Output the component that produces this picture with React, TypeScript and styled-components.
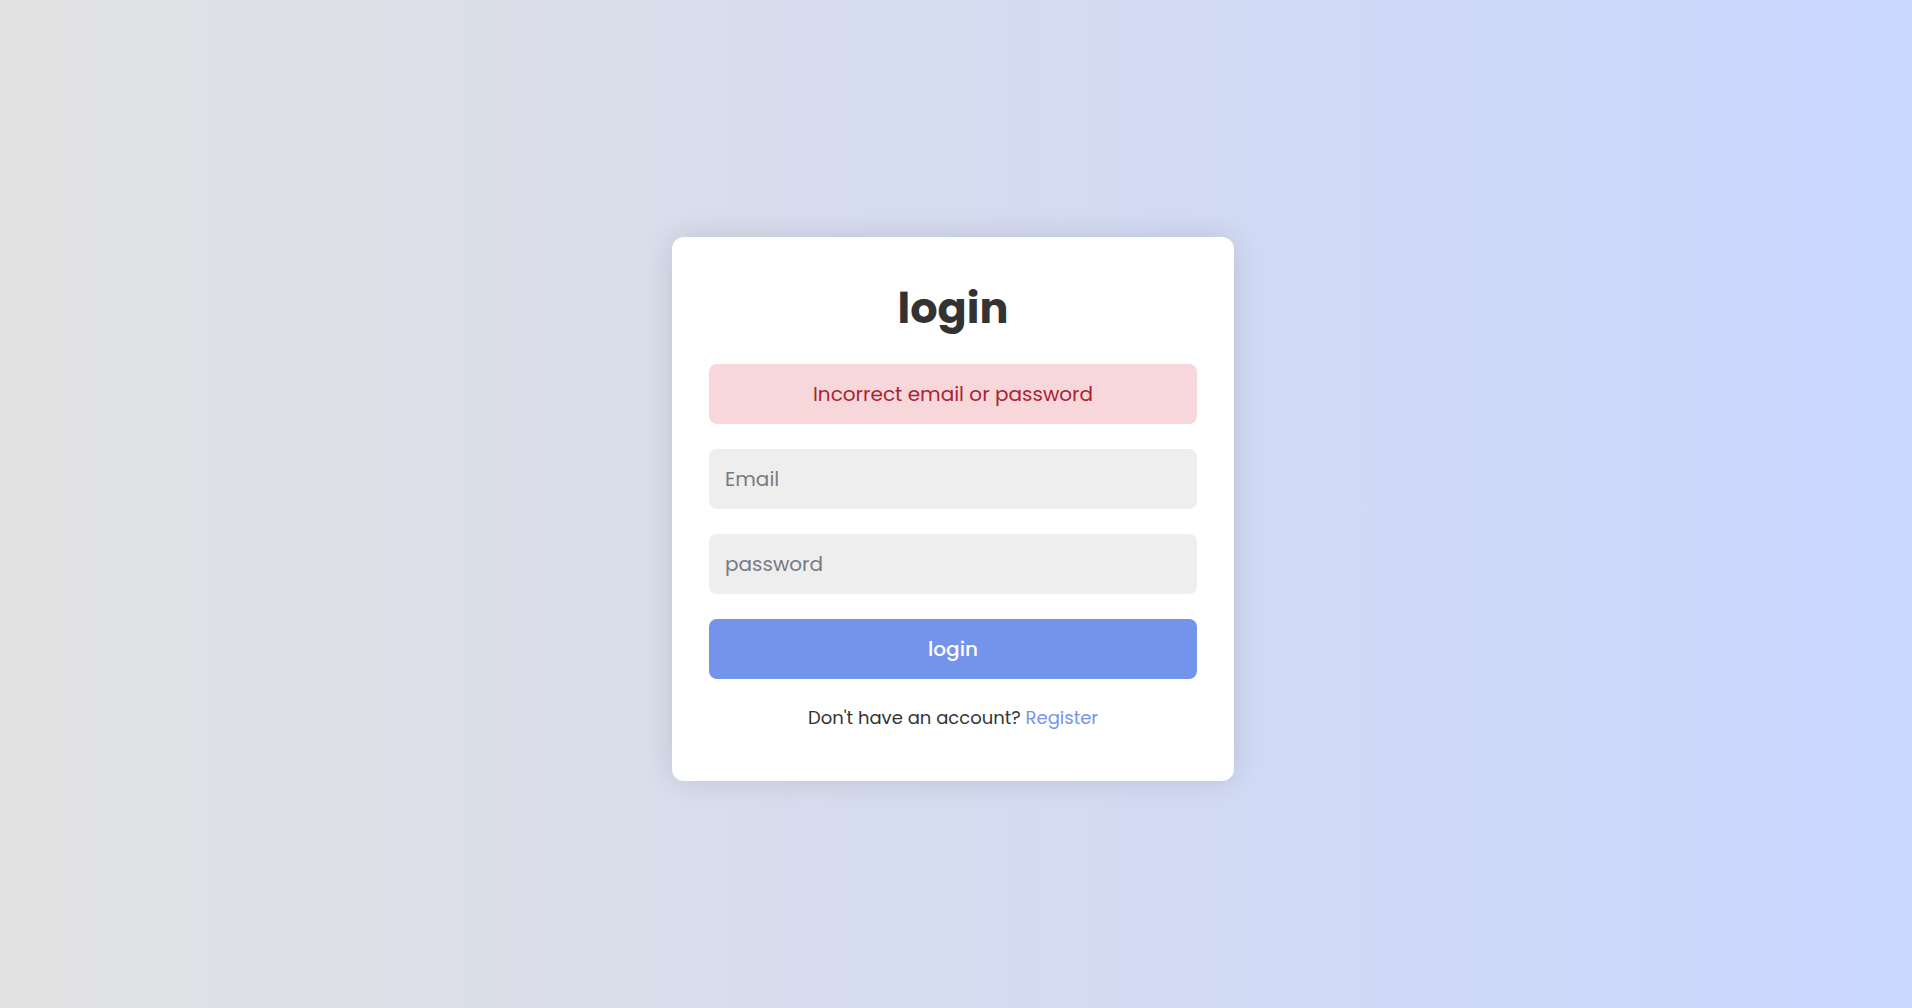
import React from "react";
import styled, { createGlobalStyle } from "styled-components";

const GlobalStyle = createGlobalStyle`
  * { box-sizing: border-box; }
  html, body { margin: 0; padding: 0; }
  body {
    font-family: "Poppins", "Open Sans", "DejaVu Sans", sans-serif;
    color: #333;
  }
`;

const Page = styled.div`
  min-height: 100vh;
  display: flex;
  align-items: center;
  justify-content: center;
  padding: 10px 6px 0 0;
  background: linear-gradient(90deg, #e2e2e2, #c9d6ff);
`;

const Card = styled.form`
  width: 562px;
  background: #fff;
  border-radius: 12px;
  box-shadow: 0 0 30px rgba(0, 0, 0, 0.12);
  padding: 41px 37px 49px;
  display: flex;
  flex-direction: column;
  gap: 25px;
`;

const Title = styled.h1`
  margin: 0 0 1px;
  text-align: center;
  font-size: 43px;
  line-height: 60px;
  font-weight: 700;
  color: #333;
`;

const Alert = styled.div`
  height: 60px;
  display: flex;
  align-items: center;
  justify-content: center;
  background: #f8d7da;
  color: #a82435;
  border-radius: 8px;
  font-size: 20px;
`;

const Input = styled.input`
  height: 60px;
  width: 100%;
  border: none;
  outline: none;
  border-radius: 8px;
  background: #eee;
  padding: 0 16px;
  font-family: inherit;
  font-size: 20px;
  color: #333;
  &::placeholder {
    color: #777a85;
  }
`;

const Button = styled.button`
  height: 60px;
  width: 100%;
  border: none;
  border-radius: 8px;
  background: #7494ec;
  color: #fff;
  font-family: inherit;
  font-size: 20px;
  font-weight: 500;
  cursor: pointer;
`;

const Footer = styled.p`
  margin: 0;
  text-align: center;
  font-size: 18px;
  line-height: 28px;
  color: #333;
`;

const Link = styled.a`
  color: #7494ec;
  text-decoration: none;
`;

export default function App() {
  return (
    <>
      <GlobalStyle />
      <Page>
        <Card onSubmit={(e) => e.preventDefault()}>
          <Title>login</Title>
          <Alert>Incorrect email or password</Alert>
          <Input type="email" placeholder="Email" />
          <Input type="password" placeholder="password" />
          <Button type="submit">login</Button>
          <Footer>
            Don't have an account? <Link href="#">Register</Link>
          </Footer>
        </Card>
      </Page>
    </>
  );
}
